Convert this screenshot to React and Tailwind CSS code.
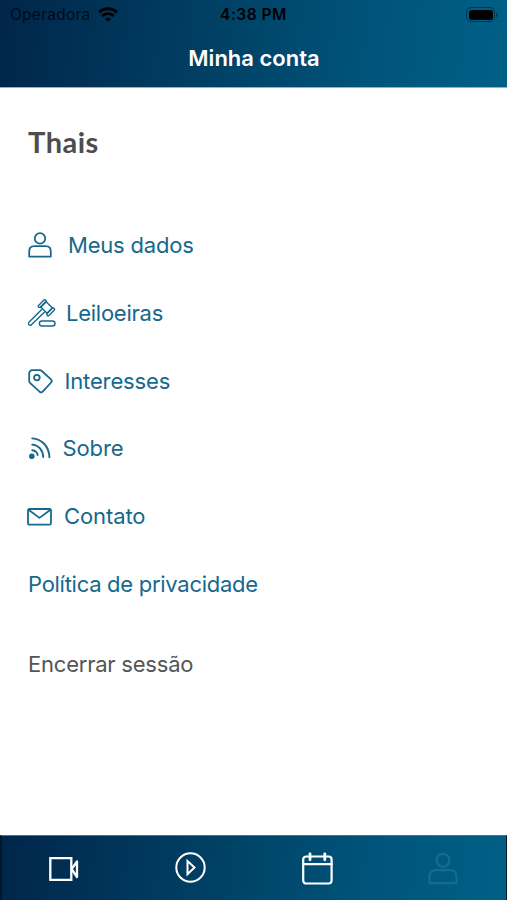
import React, { useState } from "react";

const UserIcon = ({ className }) => (
  <svg className={className} viewBox="0 0 24 26" fill="none" stroke="currentColor" strokeWidth="1.8">
    <circle cx="12" cy="6.4" r="5.2" />
    <path d="M1.2 24.6v-5.2c0-3.3 2-5.2 5.2-5.2h11.2c3.2 0 5.2 1.9 5.2 5.2v5.2z" strokeLinejoin="round" />
  </svg>
);

const GavelIcon = ({ className }) => (
  <svg className={className} viewBox="0 0 28 28" fill="none" stroke="currentColor" strokeWidth="1.4" strokeLinejoin="round" strokeLinecap="round">
    <path d="M12.6 7.8l5.3-5.3 6.6 6.6-5.3 5.3z" />
    <path d="M10.6 8.1a1.2 1.2 0 0 1 0-1.7l5.3-5.3a1.2 1.2 0 0 1 1.7 0l.9 1.5-6 6z" />
    <path d="M18.7 14.6l6-6 1.5.9a1.2 1.2 0 0 1 0 1.7l-5.3 5.3a1.2 1.2 0 0 1-1.7 0z" />
    <path d="M13.5 10.7L.9 23.3c-.7.8-.5 1.9.1 2.5.7.6 1.7.6 2.4-.1L16.300 13.200" />
    <rect x="11.4" y="22" width="15.6" height="5" rx="2.5" />
  </svg>
);

const TagIcon = ({ className }) => (
  <svg className={className} viewBox="0 0 25 25" fill="none" stroke="currentColor" strokeWidth="1.8" strokeLinejoin="round">
    <path d="M1.2 4.2a3 3 0 0 1 3-3h7.6c.8 0 1.5.3 2 .8l9.2 8.4c1 .9 1 2.2.1 3.1l-8.4 9.1c-.8.9-2.1.9-3.1.1L2.2 14.1c-.7-.6-1-1.3-1-2.1z" />
    <circle cx="8.9" cy="8.6" r="2.8" />
  </svg>
);

const FeedIcon = ({ className }) => (
  <svg className={className} viewBox="0 0 23 23" fill="none" stroke="currentColor" strokeWidth="1.9" strokeLinecap="round">
    <circle cx="3.8" cy="19.2" r="2.8" fill="currentColor" stroke="none" />
    <path d="M4.2 1.4c9.6.6 17 8 17.2 18.8" />
    <path d="M4.2 7.6c6.4.4 10.8 5.3 11 12.4" />
    <path d="M4.2 13.2c3.3.3 5.3 2.7 5.4 4.8" />
  </svg>
);

const MailIcon = ({ className }) => (
  <svg className={className} viewBox="0 0 25 18" fill="none" stroke="currentColor" strokeWidth="1.8" strokeLinejoin="round">
    <rect x="1" y="1" width="23" height="15.7" rx="1.5" />
    <path d="M1.5 1.7l11 8.2 11-8.2" />
  </svg>
);

const VideoIcon = ({ className }) => (
  <svg className={className} viewBox="0 0 30 24" fill="none" stroke="currentColor" strokeWidth="2.3">
    <path d="M1.3 1.2h21v21.6h-21z" />
    <path d="M22.6 12l5.4-7.5v15.5z" strokeLinejoin="round" />
  </svg>
);

const PlayIcon = ({ className }) => (
  <svg className={className} viewBox="0 0 31 31" fill="none" stroke="currentColor" strokeWidth="2">
    <circle cx="15.5" cy="15.5" r="14.2" />
    <path d="M12.5 9v13.2l7-6.7z" />
  </svg>
);

const CalendarIcon = ({ className }) => (
  <svg className={className} viewBox="0 0 31 33" fill="none" stroke="currentColor" strokeWidth="2.2" strokeLinecap="round">
    <rect x="1.2" y="4.5" width="28.4" height="27" rx="3" />
    <path d="M1.2 12.2h28.4" />
    <path d="M8 1.8v6M22.8 1.8v6" strokeWidth="2.8" />
  </svg>
);

const WifiIcon = ({ className }) => (
  <svg className={className} viewBox="0 0 20 15" fill="none" stroke="currentColor" strokeWidth="2.9">
    <path d="M1 5.4c5-4.8 13-4.8 18 0" />
    <path d="M4.2 8.9c3.3-3.1 8.3-3.1 11.6 0" />
    <path d="M10 14.8l-3-3c1.7-1.5 4.3-1.5 6 0z" fill="currentColor" stroke="none" />
  </svg>
);

const items = [
  { label: "Meus dados", icon: UserIcon, size: "w-6 h-[26px] -mt-px", text: "ml-4 tracking-[-0.2px]" },
  { label: "Leiloeiras", icon: GavelIcon, size: "w-7 h-7 -mt-px", text: "ml-2.5 tracking-[-0.25px]" },
  { label: "Interesses", icon: TagIcon, size: "w-[25px] h-[25px]", text: "ml-[11.5px] tracking-[-0.15px]" },
  { label: "Sobre", icon: FeedIcon, size: "w-[23px] h-[23px] -mt-px", text: "ml-[11.5px] tracking-[-0.1px]" },
  { label: "Contato", icon: MailIcon, size: "w-[25px] h-[18px] -ml-px", text: "ml-3 tracking-[-0.1px]" },
];

const tabs = [
  { name: "video", icon: VideoIcon, size: "w-[30px] h-6 mt-px -ml-[3px]" },
  { name: "play", icon: PlayIcon, size: "w-[31px] h-[31px] -mt-px -ml-px" },
  { name: "calendar", icon: CalendarIcon, size: "w-[31px] h-[33px] ml-px" },
  { name: "account", icon: UserIcon, size: "w-[30px] h-[33px]" },
];

const App = () => {
  const [activeTab, setActiveTab] = useState("account");

  return (
    <div className="flex h-screen w-full flex-col bg-white font-['Inter',sans-serif]">
      <header className="h-[88px] shrink-0 border-b border-[#8db3c6] bg-linear-[97deg,#00264a,#004165_43%,#00557c_75%,#006086]">
        <div className="grid h-[30px] grid-cols-3 items-center px-2.5 text-[15.5px] text-black">
          <div className="flex items-center">
            <span className="tracking-[0.25px] opacity-75">Operadora</span>
            <WifiIcon className="ml-[7px] -mt-px h-[15px] w-5" />
          </div>
          <span className="text-center font-semibold tracking-[0.5px]">4:38 PM</span>
          <div className="-mr-px -mt-px flex items-center justify-end">
            <div className="h-[15px] w-[29px] rounded-[5px] border border-black/40 p-[1.5px]">
              <div className="h-full w-full rounded-[3px] bg-black" />
            </div>
            <div className="ml-px h-1 w-[1.5px] rounded-r bg-black/40" />
          </div>
        </div>
        <h1 className="pt-3 pl-px text-center text-[22px] leading-8 font-semibold text-white">Minha conta</h1>
      </header>

      <main className="flex-1 px-7">
        <h2 className="pt-[34px] font-['Lato',sans-serif] text-[29px] leading-10 font-bold tracking-[0.5px] text-[#4d4d4d]">Thais</h2>
        <nav className="mt-[50px] text-[22px] text-[#16688d]">
          {items.map(({ label, icon: Icon, size, text }) => (
            <a key={label} className="flex h-[67.7px] cursor-pointer items-center">
              <Icon className={`shrink-0 ${size}`} />
              <span className={text}>{label}</span>
            </a>
          ))}
          <a className="flex h-[67.7px] cursor-pointer items-center tracking-[-0.28px]">Política de privacidade</a>
        </nav>
        <button className="mt-7 block cursor-pointer text-[22px] leading-9 tracking-[-0.22px] text-[#555555]">Encerrar sessão</button>
      </main>

      <footer className="grid h-[65px] shrink-0 grid-cols-4 border-t border-r border-l-2 border-x-[#001727] border-t-[#53717f] bg-linear-[97deg,#00264a,#004165_43%,#00557c_75%,#006086] bg-origin-border">
        {tabs.map(({ name, icon: Icon, size }) => (
          <button
            key={name}
            className={`flex cursor-pointer items-center justify-center ${
              activeTab === name ? "text-[#156c91]" : "text-white"
            }`}
            onClick={() => setActiveTab(name)}
          >
            <Icon className={size} />
          </button>
        ))}
      </footer>
    </div>
  );
};

export default App;
